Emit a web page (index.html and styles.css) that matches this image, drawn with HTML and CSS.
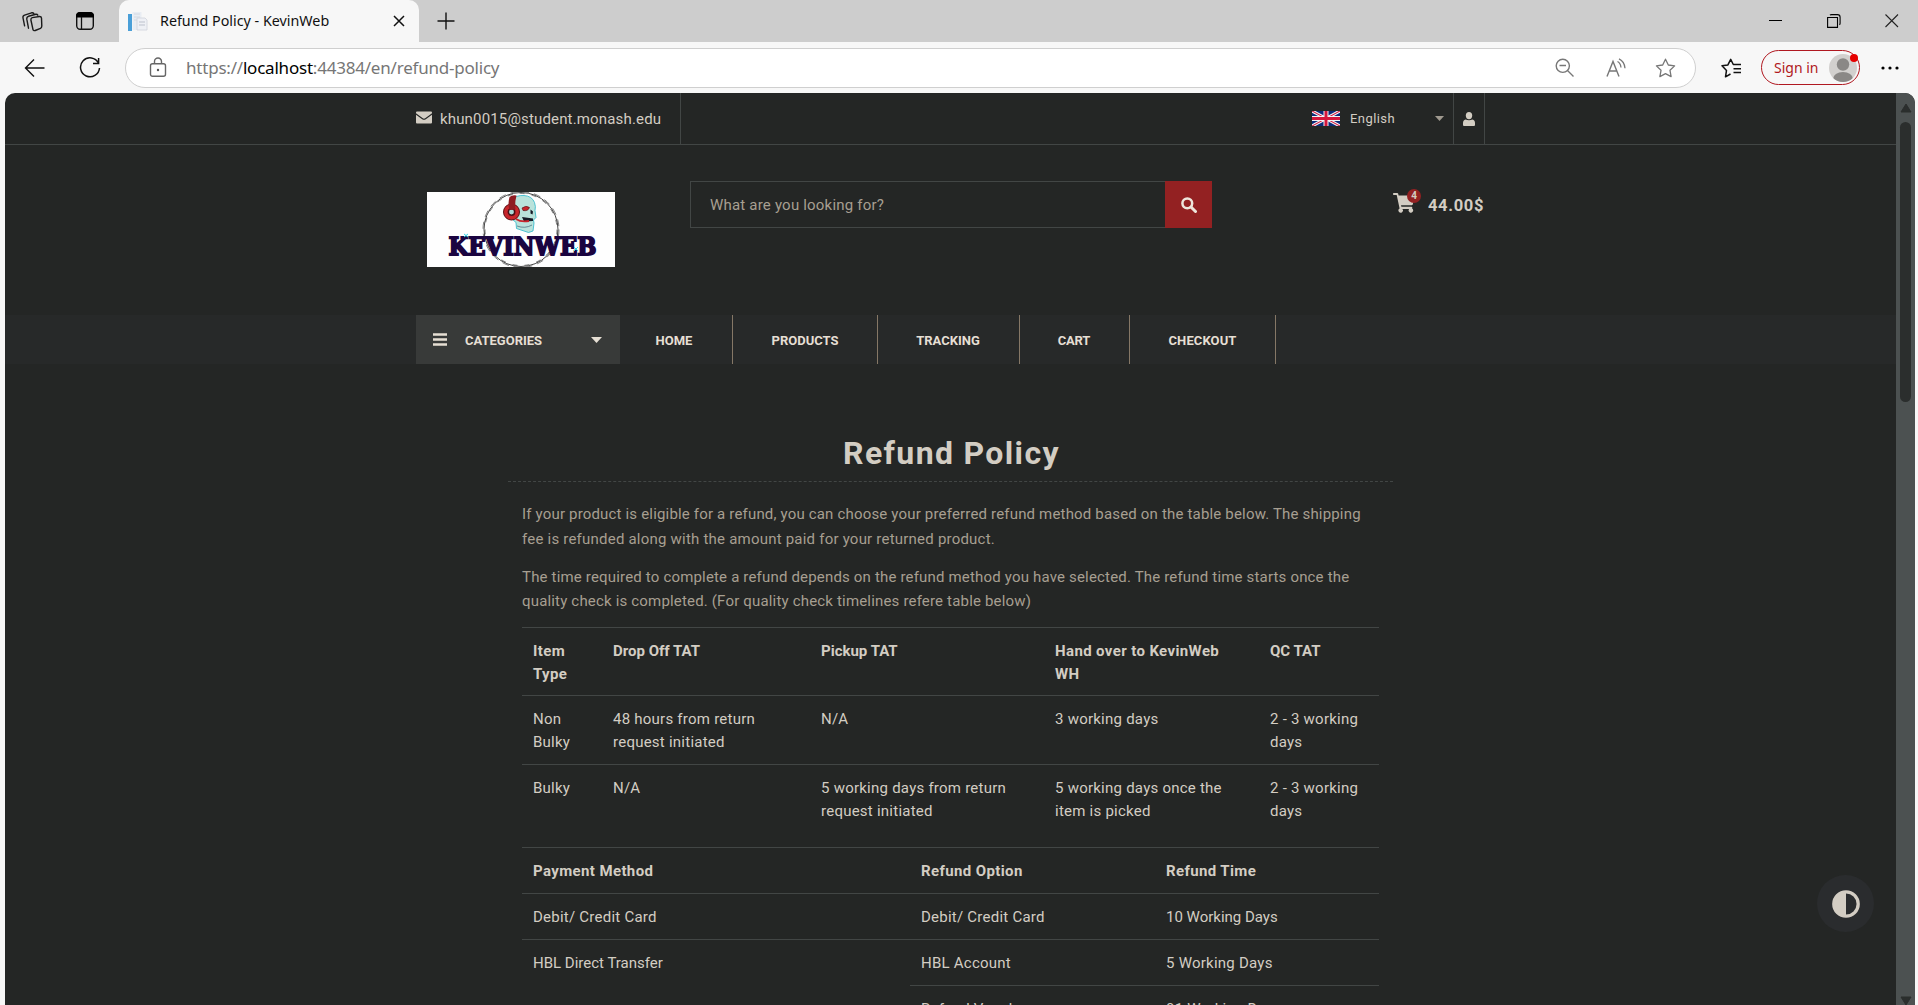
FILE: index.html
```html
<!DOCTYPE html>
<html lang="en">
<head>
<meta charset="utf-8">
<title>Refund Policy - KevinWeb</title>
<link rel="stylesheet" href="styles.css">
</head>
<body>
<div class="browser">
  <header class="tabstrip">
    <svg class="ic-work" width="24" height="24" viewBox="0 0 24 24"><g fill="none" stroke="#1b1b1b" stroke-width="1.4" stroke-linejoin="round" stroke-linecap="round"><path d="M12.200 8.600l7.300-1.100q1.800-.1 2 1.600l.3 8q0 1.500-1.300 2.200l-5.300 2.200q-1.800.5-2.300-1.300l-2-9.200q-.2-1.800 1.300-2.400z"/><path d="M8.500 19.200l-1.700-9q-.3-2.200 1.700-2.900l7.300-2q1.400-.2 2 .9M4.600 16.800L3 8.900q-.4-2.100 1.600-2.800l7-2.300q1.500-.3 2.200.7"/></g></svg>
    <svg class="ic-tabs" width="20" height="20" viewBox="0 0 20 20"><rect x="1.700" y="1.700" width="16.600" height="16.600" rx="3.500" fill="none" stroke="#111" stroke-width="1.400"/><path d="M1 6.500V5q0-4 4-4h10q4 0 4 4v1.500z" fill="#000"/><path d="M6.500 6v12" stroke="#111" stroke-width="1.300"/></svg>
    <div class="tab">
      <svg width="20" height="20" viewBox="0 0 20 20"><rect x="0" y="3" width="4" height="17" fill="#4a9fd8"/><rect x="4.500" y="1" width="9" height="18" fill="#e9edf3"/><path d="M6 3h6M6 6h6M6 9h6" stroke="#d5dae2"/><path d="M9 7h8l2 2v10H9z" fill="#eef0f5" stroke="#cfd3dc" stroke-width=".8"/><path d="M11 11h6M11 14h6" stroke="#bcc1cc"/></svg>
      <span class="tab-title">Refund Policy - KevinWeb</span>
      <svg class="tab-close" width="12" height="12" viewBox="0 0 12 12"><path d="M1 1l10 10M11 1L1 11" stroke="#111" stroke-width="1.500"/></svg>
    </div>
    <svg class="ic-plus" width="18" height="18" viewBox="0 0 18 18"><path d="M9 .5v17M.5 9h17" stroke="#111" stroke-width="1.400"/></svg>
    <svg class="win-min" width="14" height="14" viewBox="0 0 14 14"><path d="M0 6.500h13" stroke="#000"/></svg>
    <svg class="win-max" width="14" height="14" viewBox="0 0 14 14"><path d="M.6 3.500h9.900v9.900H.6zM3 1.200q.5-.6 1.500-.6h6q2.600 0 2.600 2.600v6q0 1-.7 1.500" fill="none" stroke="#000" stroke-width="1.100"/></svg>
    <svg class="win-x" width="14" height="14" viewBox="0 0 14 14"><path d="M.5.500l12.500 12.500M13 .5L.5 13" stroke="#222" stroke-width="1.100"/></svg>
  </header>
  <div class="toolbar">
    <svg class="ic-back" width="22" height="20" viewBox="0 0 22 20"><path d="M20.500 10H1.500M10 1.500L1.500 10l8.500 8.500" fill="none" stroke="#111" stroke-width="1.400"/></svg>
    <svg class="ic-reload" width="22" height="22" viewBox="0 0 22 22"><path d="M19.500 6A9.500 9.500 0 1 0 20.500 11M19.600 1v5.500H14" fill="none" stroke="#111" stroke-width="1.500"/></svg>
    <div class="address">
      <svg class="ic-lock" width="18" height="21" viewBox="0 0 18 21"><rect x="1.500" y="6.700" width="15" height="12.600" rx="2" fill="none" stroke="#666" stroke-width="1.400"/><path d="M5.500 6.500V4.500a3.500 3.500 0 0 1 7 0v2" fill="none" stroke="#666" stroke-width="1.400"/><circle cx="9" cy="13" r="1.200" fill="#555"/></svg>
      <span class="url">https://<b>localhost</b>:44384/en/refund-policy</span>
      <svg class="ic-zoom" width="20" height="20" viewBox="0 0 20 20"><circle cx="7.800" cy="7.800" r="6.600" fill="none" stroke="#777" stroke-width="1.400"/><path d="M4.500 7.500h6.500M12.500 12.500l6 6" stroke="#777" stroke-width="1.400"/></svg>
      <svg class="ic-read" width="21" height="20" viewBox="0 0 21 20"><path d="M1 18.500L7 3.500l6 15M3.200 13h7.600" fill="none" stroke="#777" stroke-width="1.400"/><path d="M11.500 3.500q3 1.500 3.500 6M13 .8q5.500 2.500 6 9.500" fill="none" stroke="#777" stroke-width="1.300"/></svg>
      <svg class="ic-star" width="21" height="20" viewBox="0 0 21 20"><path d="M10.500 1.200l2.800 5.800 6.300.9-4.600 4.400 1.100 6.300-5.600-3-5.600 3 1.100-6.300L1.400 7.900l6.300-.9z" fill="none" stroke="#777" stroke-width="1.300" stroke-linejoin="round"/></svg>
    </div>
    <svg class="ic-favs" width="21" height="20" viewBox="0 0 21 20"><path d="M9.500 16l-5 2.800 1-6.400L1 7.800l5.900-.9L9.700 1.300l2.600 5.200H20M12.500 10.700H20M12.500 14.500H20" fill="none" stroke="#111" stroke-width="1.500" stroke-linejoin="round"/></svg>
    <div class="signin"><span>Sign in</span>
      <svg class="avatar" width="28" height="28" viewBox="0 0 28 28"><clipPath id="av"><circle cx="14" cy="14" r="14"/></clipPath><circle cx="14" cy="14" r="14" fill="#d2d0ce"/><g clip-path="url(#av)" fill="#8a8886"><circle cx="14" cy="10.500" r="6.200"/><ellipse cx="14" cy="25" rx="10" ry="7"/></g></svg>
      <i class="alert"></i>
    </div>
    <svg class="ic-more" width="18" height="4" viewBox="0 0 18 4"><circle cx="2" cy="2" r="1.600"/><circle cx="9" cy="2" r="1.600"/><circle cx="16" cy="2" r="1.600"/></svg>
  </div>

  <div class="viewport">
    <div class="page">
      <div class="topbar"><div class="wrap">
        <div class="mail"><svg width="16" height="13" viewBox="0 0 16 13"><path d="M1 .5h14q1 0 1 1v.8L9.200 7.300q-1.200.8-2.400 0L0 2.300v-.8q0-1 1-1zM0 3.700l6.200 4.500q1.800 1.200 3.600 0L16 3.700V11.500q0 1-1 1H1q-1 0-1-1z" fill="#d3cdc3"/></svg><span>khun0015@student.monash.edu</span></div>
        <div class="tools">
          <svg class="flag" width="28" height="15" viewBox="0 0 28 15"><rect width="28" height="15" fill="#0a2a7a"/><path d="M0 0l28 15M28 0L0 15" stroke="#f2f2f5" stroke-width="3.200"/><path d="M0 0l28 15M28 0L0 15" stroke="#d4163c" stroke-width="1.100"/><path d="M14 0v15M0 7.500h28" stroke="#f2f2f5" stroke-width="5"/><path d="M14 0v15M0 7.500h28" stroke="#d4163c" stroke-width="3"/></svg>
          <span class="lang">English</span>
          <svg class="lang-caret" width="9" height="5" viewBox="0 0 9 5"><path d="M0 0h9L4.500 5z" fill="#a09a90"/></svg>
          <div class="user"><svg width="12" height="14" viewBox="0 0 12 14"><ellipse cx="6" cy="3.600" rx="3.200" ry="3.600" fill="#d3cdc3"/><path d="M2.500 7.500q3.500 1.500 7 0Q12 8 12 11v2q0 1-1 1H1q-1 0-1-1v-2q0-3 2.500-3.500z" fill="#d3cdc3"/></svg></div>
        </div>
      </div></div>

      <div class="masthead wrap">
        <svg class="logo" width="188" height="75" viewBox="0 0 188 75">
          <rect width="188" height="75" fill="#fefefe"/>
          <g fill="none" stroke="#333" stroke-width=".9"><circle cx="94" cy="37.500" r="37"/><circle cx="94" cy="37.500" r="38" stroke-width=".6" stroke-dasharray="7 5"/><circle cx="94" cy="37.500" r="36" stroke-width=".6" stroke-dasharray="5 7"/></g>
          <path d="M84 8q5-5 13-4.500 8 .5 10.500 7 1.500 4 .5 8l1 7-2.500 2.500.5 3-1 8-4.500 1.500-12-4-.5-6-8-7z" fill="#b9e2db" stroke="#2ab6c9" stroke-width=".8"/>
          <path d="M95 16q4-3 7.500-.5-1.500 4-6.500 3z" fill="#c8252b" stroke="#4a1016" stroke-width=".6"/>
          <path d="M103.500 17.500l2.500 2-.5 3-2-1zM95 25l11 1.500v2.500l-9 .5z" fill="#161a26"/><path d="M90 34q8 3 15-1" fill="none" stroke="#467" stroke-width=".7"/>
          <circle cx="84.500" cy="20" r="8" fill="#c8252b" stroke="#5a1218"/><circle cx="84.500" cy="20" r="3.200" fill="#a9d9d8" stroke="#461017" stroke-width="1.500"/>
          <path d="M82.500 5q3-2.500 7-1.500-2 8-1 14l-6 .5q-2-6 0-13z" fill="#8e1b22"/><path d="M89 27q5 3.500 13 2" fill="none" stroke="#c8252b" stroke-width="1.800"/>
          <text class="logo-text" x="21.500" y="62.500" textLength="148" lengthAdjust="spacingAndGlyphs">KEVINWEB</text>
          <path d="M37 42l4 3m0-3l-4 3M147 55l4 4m0-4l-4 4" stroke="#35d6e8"/>
        </svg>
        <div class="search"><div class="field">What are you looking for?</div><div class="go"><svg width="16" height="16" viewBox="0 0 16 16"><circle cx="6.300" cy="6.300" r="4.900" fill="none" stroke="#eee6dc" stroke-width="2.500"/><path d="M10 10l4.500 4.500" stroke="#eee6dc" stroke-width="3" stroke-linecap="round"/></svg></div></div>
        <div class="cart">
          <svg width="22" height="20" viewBox="0 0 22 20"><path d="M0 .8Q0 0 .8 0h3.400q.8 0 1 .8l.4 1.700h15q1.200 0 1 1.200l-1.800 7.600q-.2.900-1.200.9H8l.4 1.600h10q1 0 .9 1l-.2.800a2.200 2.200 0 1 1-2.900.4H9.300a2.200 2.200 0 1 1-2.700-.4L3.700 2H.8Q0 2 0 1.200z" fill="#d3cdc3"/></svg>
          <b class="badge">4</b><b class="total">44.00$</b>
        </div>
      </div>

      <nav class="nav"><div class="wrap">
        <div class="cats"><svg width="14" height="13" viewBox="0 0 14 13"><path d="M0 1.500h14M0 6.500h14M0 11.500h14" stroke="#e6dfd4" stroke-width="2.400"/></svg><span>CATEGORIES</span><svg class="caret" width="11" height="6" viewBox="0 0 11 6"><path d="M0 0h11L5.500 6z" fill="#e6dfd4"/></svg></div>
        <a class="n1">HOME</a><a class="n2">PRODUCTS</a><a class="n3">TRACKING</a><a class="n4">CART</a><a class="n5">CHECKOUT</a>
      </div></nav>

      <main class="content">
        <h1>Refund Policy</h1>
        <div class="policy">
          <p>If your product is eligible for a refund, you can choose your preferred refund method based on the table below. The shipping<br><span class="looser">fee is refunded along with the amount paid for your returned product.</span></p>
          <p>The time required to complete a refund depends on the refund method you have selected. The refund time starts once the<br>quality check is completed. (For quality check timelines refere table below)</p>
          <table class="tat">
            <colgroup><col class="a1"><col class="a2"><col class="a3"><col class="a4"><col></colgroup>
            <tr class="head"><th>Item<br>Type</th><th class="snug">Drop Off TAT</th><th class="snug">Pickup TAT</th><th>Hand over to KevinWeb<br>WH</th><th class="snug">QC TAT</th></tr>
            <tr class="tall"><td>Non<br>Bulky</td><td>48 hours from return<br>request initiated</td><td>N/A</td><td>3 working days</td><td>2 - 3 working<br>days</td></tr>
            <tr class="head"><td>Bulky</td><td>N/A</td><td>5 working days from return<br>request initiated</td><td>5 working days once the<br>item is picked</td><td>2 - 3 working<br>days</td></tr>
          </table>
          <table class="pay">
            <colgroup><col class="b1"><col class="b2"><col></colgroup>
            <tr><th>Payment Method</th><th>Refund Option</th><th>Refund Time</th></tr>
            <tr><td>Debit/ Credit Card</td><td>Debit/ Credit Card</td><td class="snug">10 Working Days</td></tr>
            <tr><td rowspan="2" class="snug">HBL Direct Transfer</td><td>HBL Account</td><td>5 Working Days</td></tr>
            <tr><td>Refund Voucher</td><td>01 Working Day</td></tr>
          </table>
        </div>
      </main>
      <div class="theme"><svg width="28" height="28" viewBox="0 0 28 28"><circle cx="14" cy="14" r="12.200" fill="none" stroke="#d3cdc3" stroke-width="3.300"/><path d="M14 1a13 13 0 0 0 0 26z" fill="#d3cdc3"/></svg></div>
    </div>
    <div class="scroll">
      <svg width="12" height="10" viewBox="0 0 12 10"><path d="M6 1l5 8H1z" fill="#2b2e2d" stroke="#2b2e2d" stroke-linejoin="round"/></svg>
      <div class="thumb"></div>
      <svg class="down" width="12" height="10" viewBox="0 0 12 10"><path d="M6 9L1 1h10z" fill="#2b2e2d" stroke="#2b2e2d" stroke-linejoin="round"/></svg>
    </div>
  </div>
</div>
</body>
</html>
```
FILE: styles.css
```css
* { box-sizing: border-box; }
body { margin: 0; width: 1918px; height: 1005px; overflow: hidden; background: #f7f7f7; font-family: Roboto, sans-serif; }
svg { display: block; flex: none; }
.browser { display: flex; flex-direction: column; height: 1005px; }
.tabstrip { display: flex; align-items: center; height: 42px; background: #cdcdcd; font: 14.300px "Noto Sans", sans-serif; color: #111; }
.ic-work { margin: 0 31px 0 20px; }
.tab { display: flex; align-items: center; width: 300px; height: 42px; margin-left: 24px; padding: 0 14px 0 9px; background: #f7f7f7; border-radius: 10px 10px 0 0; }
.tab-title { flex: 1; margin-left: 12px; padding-bottom: 2px; white-space: nowrap; }
.ic-plus { margin-left: 18px; }
.win-min { margin-left: auto; }
.win-max { margin-left: 44px; }
.win-x { margin: 0 19px 0 44px; }
.toolbar { display: flex; align-items: center; height: 51px; padding: 0 19px 0 24px; background: #f7f7f7; }
.ic-reload { margin: 0 24px 0 33px; }
.address { display: flex; align-items: center; width: 1571px; height: 40px; padding: 0 19px 0 23px; background: #fff; border: 1px solid #cfcfcf; border-radius: 20px; }
.url { flex: 1; margin-left: 19px; font: 17px "Noto Sans", sans-serif; letter-spacing: -.21px; color: #767676; }
.url b { font-weight: 400; color: #000; }
.ic-read { margin: 0 28px 0 31px; }
.ic-favs { margin: 0 19px 0 25px; }
.signin { position: relative; display: flex; align-items: center; justify-content: space-between; width: 99px; height: 35px; padding: 0 2px 0 12px; border: 1px solid #b01820; border-radius: 18px; color: #b01820; font: 14px "Noto Sans", sans-serif; }
.alert { position: absolute; right: 1px; top: 3px; width: 8px; height: 8px; border-radius: 50%; background: #e60000; }
.ic-more { margin-left: auto; }
.viewport { display: flex; height: 912px; margin: 0 3px 0 5px; overflow: hidden; border-radius: 10px 10px 0 0; background: #242625; }
.page { position: relative; width: 1891px; overflow: hidden; color: #d3cdc3; }
.wrap { display: flex; width: 1069px; margin-left: 411px; }
.topbar { height: 52px; border-bottom: 1px solid #424645; }
.topbar .wrap { height: 51px; justify-content: space-between; }
.mail { display: flex; align-items: center; width: 265px; gap: 8px; border-right: 1px solid #424645; font-size: 15px; letter-spacing: .16px; }
.mail svg { margin-bottom: 2px; }
.tools { display: flex; align-items: center; font-size: 13px; letter-spacing: .42px; }
.lang { width: 86px; margin-left: 9px; padding-left: 1px; }
.user { display: flex; align-items: center; justify-content: center; width: 32px; height: 51px; margin-left: 9px; border: solid #424645; border-width: 0 1px; }
.masthead { height: 170px; }
.logo { margin: 47px 75px 0 11px; }
.logo-text { font: bold 25px "DejaVu Serif", serif; fill: #1a0440; stroke: #1a0440; stroke-width: 1.800px; }
.search { display: flex; width: 522px; height: 47px; margin-top: 36px; }
.field { flex: 1; display: flex; align-items: center; padding: 1px 0 0 19px; border: 1px solid #424645; border-right: 0; font-size: 15px; letter-spacing: .2px; color: #a79f91; }
.go { display: flex; align-items: center; justify-content: center; width: 47px; background: #932122; }
.cart { position: relative; display: flex; align-items: center; width: 92px; height: 22px; margin: 48px 0 0 auto; }
.cart svg { margin-bottom: 2px; }
.badge { position: absolute; left: 14px; top: -4px; width: 14px; height: 14px; border-radius: 50%; background: #932122; font-size: 10px; line-height: 14px; text-align: center; }
.total { margin-left: 13px; padding-top: 2px; font-size: 16.500px; letter-spacing: .65px; }
.nav { height: 49px; background: #272929; }
.nav .wrap { height: 49px; font-size: 13px; font-weight: 700; color: #e6dfd4; }
.cats { display: flex; align-items: center; width: 204px; padding: 0 18px 0 17px; background: #383a39; }
.cats span { margin-left: 18px; }
.caret { margin-left: auto; }
.nav a { display: flex; align-items: center; justify-content: center; padding-top: 1px; border-right: 1px solid #857766; }
.nav .cats span { padding-top: 1px; }
.nav .n1 { width: 113px; padding-right: 4px; }
.n2 { width: 145px; }
.nav .n3 { width: 142px; padding-right: 1px; }
.nav .n4 { width: 110px; padding-right: 1px; letter-spacing: -.2px; }
.n5 { width: 146px; letter-spacing: .1px; }
.content { width: 885px; margin: 67px 0 0 503px; }
h1 { height: 51px; margin: 0; padding-left: 2px; border-bottom: 1px dashed #424645; font-size: 32px; line-height: 44px; font-weight: 700; letter-spacing: 1.350px; text-align: center; }
.policy { padding: 20px 14px 0; }
p { margin: 0 0 14px; font-size: 15px; line-height: 24.500px; letter-spacing: .175px; color: #a79f91; white-space: nowrap; }
p + p { margin-bottom: 14px; line-height: 24px; }
.looser { letter-spacing: .216px; }
table { width: 857px; border-collapse: separate; border-spacing: 0; table-layout: fixed; font-size: 15px; line-height: 22.500px; letter-spacing: .24px; }
th, td { padding: 12px 0 9px 11px; border-top: 1px solid #424645; text-align: left; vertical-align: top; white-space: nowrap; }
.tat th, .tat td { padding-bottom: 0; }
th { font-weight: 700; letter-spacing: .38px; }
table .snug { letter-spacing: 0; }
.head { height: 68px; }
.tall { height: 69px; }
.pay tr { height: 46px; }
.pay th, .pay td { padding-bottom: 8px; }
.a1 { width: 80px; }
.a2 { width: 208px; }
.a3 { width: 234px; }
.a4 { width: 215px; }
.b1 { width: 388px; }
.b2 { width: 245px; }
.tat { margin-bottom: 15px; }
.theme { position: absolute; left: 1812px; top: 782px; display: flex; align-items: center; justify-content: center; width: 57px; height: 57px; border-radius: 50%; background: #2a2c2e; }
.scroll { display: flex; flex-direction: column; align-items: center; width: 19px; padding-top: 10px; background: #4c5151; }
.thumb { width: 11px; height: 280px; margin-top: 9px; border-radius: 6px; background: #2b2e2d; }
.down { margin-top: auto; margin-bottom: -1px; }
```
